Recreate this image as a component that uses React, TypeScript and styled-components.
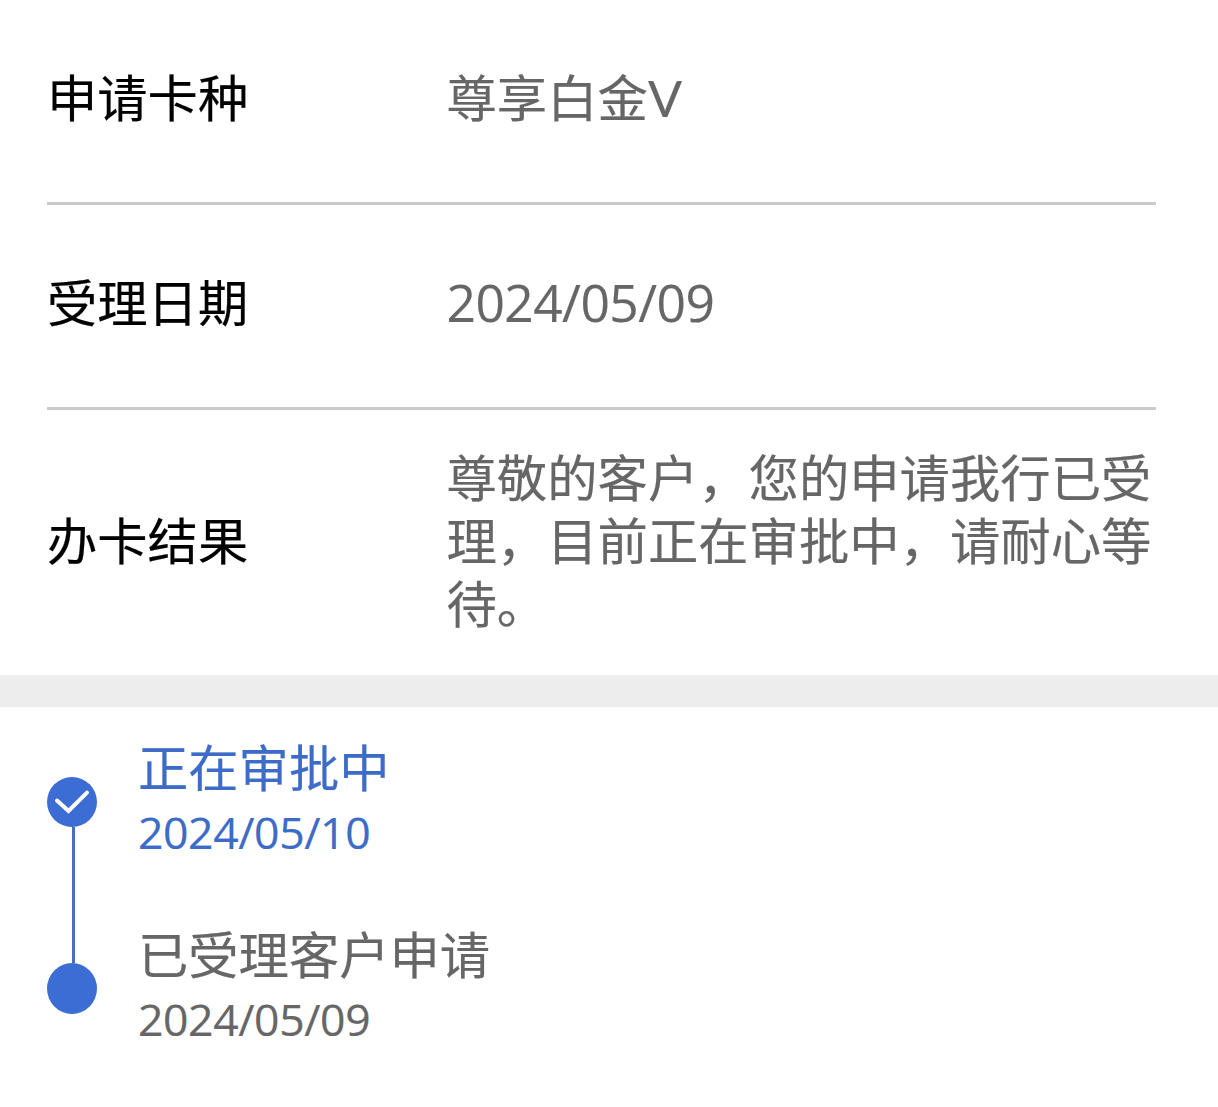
import styled, {createGlobalStyle} from 'styled-components'

interface IActive {
    $active?: boolean;
}

interface INumeric {
    $numeric?: boolean;
}

const rows = [
    {label: '申请卡种', value: '尊享白金V'},
    {label: '受理日期', value: '2024/05/09', numeric: true},
    {label: '办卡结果', value: '尊敬的客户，您的申请我行已受理，目前正在审批中，请耐心等待。'},
]

const App = () => {
    return (
        <Page>
            <GlobalStyle/>
            <InfoList>
                {rows.map((row) => (
                    <InfoRow key={row.label}>
                        <InfoLabel>{row.label}</InfoLabel>
                        <InfoValue $numeric={row.numeric}>{row.value}</InfoValue>
                    </InfoRow>
                ))}
            </InfoList>
            <Divider/>
            <Timeline>
                <Rail>
                    <Dot>
                        <svg width="50" height="50" viewBox="0 0 50 50" fill="none">
                            <path d="M10 23.5L21.5 34L40 15.7" stroke="#fff" strokeWidth="4" strokeLinecap="round"/>
                        </svg>
                    </Dot>
                    <Line/>
                    <Dot $last/>
                </Rail>
                <Steps>
                    <Step $active>
                        <StepTitle>正在审批中</StepTitle>
                        <StepDate>2024/05/10</StepDate>
                    </Step>
                    <Step>
                        <StepTitle>已受理客户申请</StepTitle>
                        <StepDate>2024/05/09</StepDate>
                    </Step>
                </Steps>
            </Timeline>
        </Page>
    )
}
export default App

// ==========================================

const GlobalStyle = createGlobalStyle`
  * {
    box-sizing: border-box;
  }

  body {
    margin: 0;
    background: #fff;
  }
`

const Page = styled.main`
  width: 1218px;
  height: 1107px;
  overflow: hidden;
  background: #fff;
  font-family: Lato, "Noto Sans CJK SC", sans-serif;
  -webkit-text-stroke: 0.2px currentColor;
`

const InfoList = styled.section`
  height: 675px;
  padding: 0 62px 0 47px;
`

const InfoRow = styled.div`
  height: 205px;
  padding-bottom: 8px;
  display: flex;
  align-items: center;
  border-bottom: 3px solid #cacaca;

  &:last-child {
    height: 265px;
    padding-bottom: 5px;
    border-bottom: none;
  }
`

const InfoLabel = styled.div`
  flex: 0 0 399.5px;
  color: #000;
  font-size: 50.3px;
  line-height: 63px;
`

const InfoValue = styled.div<INumeric>`
  flex: 1;
  color: #666;
  font-family: ${(props) => props.$numeric ? '"Open Sans"' : 'Lato'}, "Noto Sans CJK SC", sans-serif;
  font-size: ${(props) => props.$numeric ? '51.5px' : '50.35px'};
  letter-spacing: ${(props) => props.$numeric ? '-0.55px' : 'normal'};
  line-height: 63px;
`

const Divider = styled.div`
  height: 32px;
  background: #ededed;
`

const Timeline = styled.section`
  display: flex;
  padding: 29px 47px;
`

const Rail = styled.div`
  width: 50px;
  margin: 41px 41px 0 0;
  display: flex;
  flex-direction: column;
  align-items: center;
`

const Dot = styled.div<{$last?: boolean}>`
  width: 50px;
  height: ${(props) => props.$last ? '51px' : '50px'};
  border-radius: 50%;
  background: #3c6dd5;
`

const Line = styled.div`
  width: 3px;
  height: 136px;
  margin-left: 3px;
  background: #466fbd;
`

const Steps = styled.div`
  display: flex;
  flex-direction: column;
`

const Step = styled.div<IActive>`
  height: 187px;
  color: ${(props) => props.$active ? '#3d6bc8' : '#666'};
`

const StepTitle = styled.div`
  font-size: 50.3px;
  line-height: 63px;
`

const StepDate = styled.div`
  font-family: "Open Sans", sans-serif;
  font-size: 44.5px;
  letter-spacing: -0.4px;
  line-height: 66px;
`
